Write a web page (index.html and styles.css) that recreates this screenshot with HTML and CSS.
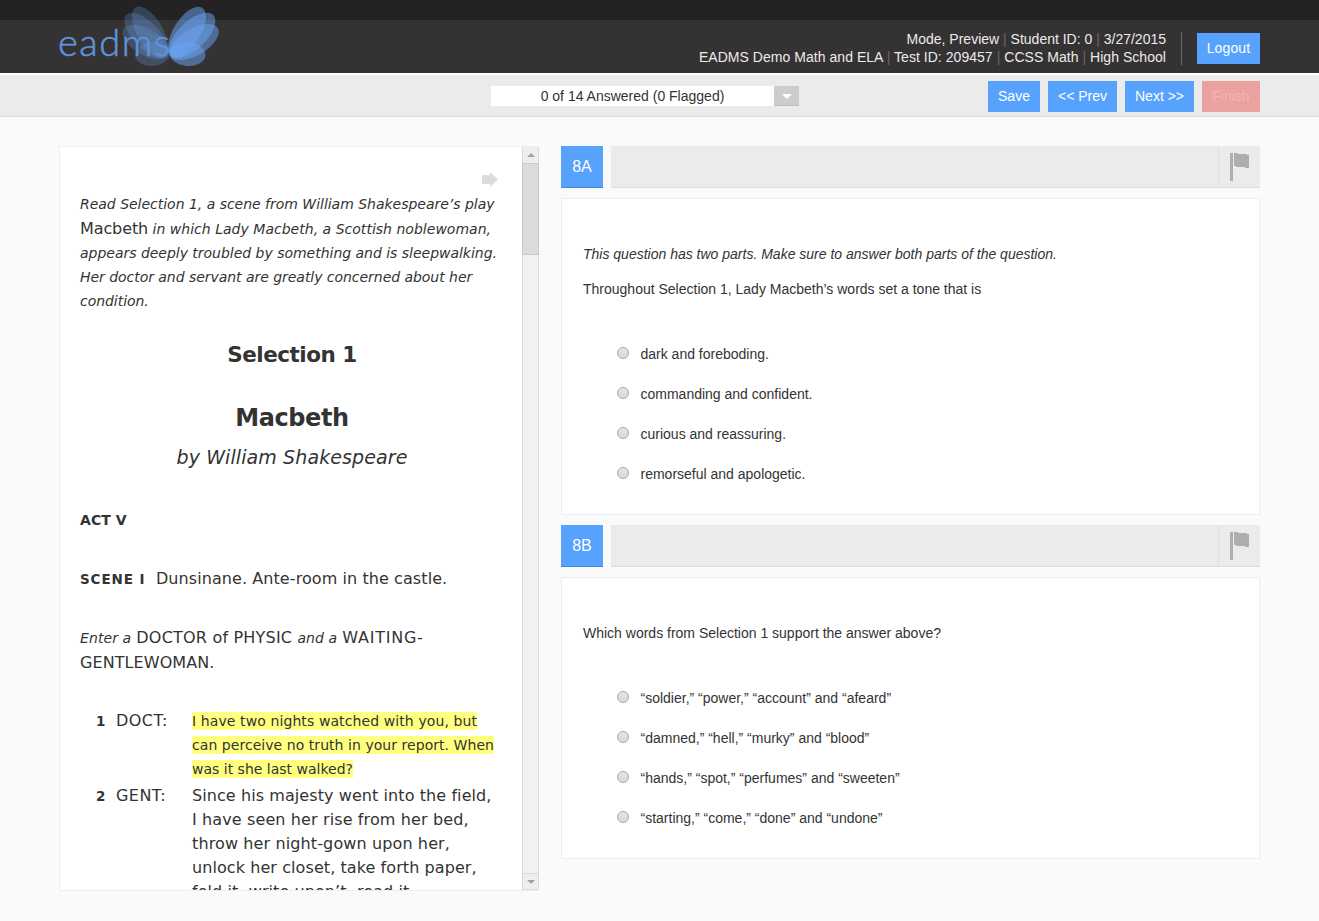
FILE: index.html
```html
<!DOCTYPE html>
<html lang="en">
<head>
<meta charset="utf-8">
<title>EADMS Student Test</title>
<link rel="stylesheet" href="styles.css">
</head>
<body>
<div class="topstrip"></div>
<header class="header">
  <div class="logo">
    <svg width="164" height="72" viewBox="0 0 164 72">
      <g fill="#6da4f0" fill-opacity=".25">
        <ellipse cx="92" cy="32" rx="13" ry="28.500" transform="rotate(-30 92 32)"/>
        <ellipse cx="88.500" cy="35.500" rx="13" ry="29" transform="rotate(-44 88.500 35.500)" />
        <ellipse cx="88" cy="42" rx="13" ry="26" transform="rotate(-60 88 42)" />
        <ellipse cx="94.500" cy="54" rx="17.500" ry="12" transform="rotate(-5 94.500 54)" />
      </g>
      <text class="logo-text" x="0" y="55.500" textLength="112" lengthAdjust="spacing">eadms</text>
      <g fill="#6ca3f3" fill-opacity=".52">
        <ellipse cx="129" cy="32" rx="13.500" ry="28.500" transform="rotate(32 129 32)"/>
        <ellipse cx="134" cy="35.500" rx="14" ry="29.500" transform="rotate(46 134 35.500)"/>
        <ellipse cx="136" cy="42" rx="13.500" ry="27.500" transform="rotate(60 136 42)"/>
        <ellipse cx="129.500" cy="54" rx="18" ry="12" transform="rotate(5 129.500 54)"/>
      </g>
    </svg>
  </div>
  <div class="account">
    <div class="info">
      <div>Mode, Preview <i>|</i> Student ID: 0 <i>|</i> 3/27/2015</div>
      <div class="info-test">EADMS Demo Math and ELA <i>|</i> Test ID: 209457 <i>|</i> CCSS Math <i>|</i> High School</div>
    </div>
    <div class="rule"></div>
    <button class="btn logout">Logout</button>
  </div>
</header>
<nav class="toolbar">
  <div class="progress">
    <span class="progress-label">0 of 14 Answered (0 Flagged)</span>
    <span class="progress-arrow"><svg width="10" height="5"><path d="M0 0h10L5 5z" fill="#fff"/></svg></span>
  </div>
  <div class="actions">
    <button class="btn save">Save</button>
    <button class="btn step">&lt;&lt; Prev</button>
    <button class="btn step">Next &gt;&gt;</button>
    <button class="btn finish">Finish</button>
  </div>
</nav>
<main class="main">
  <section class="passage">
    <div class="passage-body">
      <div class="expand"><svg width="16" height="15"><path d="M0 3h8V0l8 7.500L8 15v-3H0z" fill="#dcdcdc"/></svg></div>
      <div class="line em">Read Selection 1, a scene from William Shakespeare’s play</div>
      <div class="line em l25"><span class="title-word">Macbeth</span> <span class="loose">in which Lady Macbeth, a Scottish noblewoman,</span></div>
      <div class="line em">appears deeply troubled by something and is sleepwalking.</div>
      <div class="line em tight">Her doctor and servant are greatly concerned about her</div>
      <div class="line em tight">condition.</div>
      <h2 class="selection">Selection 1</h2>
      <h1 class="play">Macbeth</h1>
      <div class="byline">by William Shakespeare</div>
      <div class="line act">ACT V</div>
      <div class="line scene"><b>SCENE I</b>Dunsinane. Ante-room in the castle.</div>
      <div class="line enter"><em>Enter a</em> <span class="caps">DOCTOR of PHYSIC</span> <em>and a</em> <span class="waiting">WAITING-</span></div>
      <div class="line l25">GENTLEWOMAN.</div>
      <div class="speech first">
        <b>1</b><span class="who">DOCT:</span>
        <div class="small">
          <div class="line"><mark class="wide">I have two nights watched with you, but</mark></div>
          <div class="line"><mark class="mid">can perceive no truth in your report. When</mark></div>
          <div class="line"><mark>was it she last walked?</mark></div>
        </div>
      </div>
      <div class="speech second">
        <b>2</b><span class="who">GENT:</span>
        <div class="verse">
          <div class="line">Since his majesty went into the field,</div>
          <div class="line verse-wide">I have seen her rise from her bed,</div>
          <div class="line verse-wide">throw her night-gown upon her,</div>
          <div class="line">unlock her closet, take forth paper,</div>
          <div class="line">fold it, write upon’t, read it,</div>
        </div>
      </div>
    </div>
    <div class="scrollbar">
      <div class="sb-btn"><svg width="8" height="4"><path d="M0 4h8L4 0z" fill="#a3a3a3"/></svg></div>
      <div class="sb-thumb"></div>
      <div class="sb-track"></div>
      <div class="sb-btn sb-down"><svg width="8" height="4"><path d="M0 0h8L4 4z" fill="#a3a3a3"/></svg></div>
    </div>
  </section>
  <section class="questions">
    <div class="qhead">
      <div class="qnum">8A</div>
      <div class="qbar"><div class="flag"><svg width="19" height="28" shape-rendering="crispEdges"><path d="M0 0h3v28H0zM4 0h4v1h9v1h2v13h-4v-1H6v-1H4z" fill="#aeaeae"/></svg></div></div>
    </div>
    <div class="card card-a">
      <p class="note">This question has two parts. Make sure to answer both parts of the question.</p>
      <p class="prompt">Throughout Selection 1, Lady Macbeth’s words set a tone that is</p>
      <div class="choices">
        <label><span class="radio"></span>dark and foreboding.</label>
        <label><span class="radio"></span>commanding and confident.</label>
        <label><span class="radio"></span>curious and reassuring.</label>
        <label><span class="radio"></span>remorseful and apologetic.</label>
      </div>
    </div>
    <div class="qhead">
      <div class="qnum">8B</div>
      <div class="qbar"><div class="flag"><svg width="19" height="28" shape-rendering="crispEdges"><path d="M0 0h3v28H0zM4 0h4v1h9v1h2v13h-4v-1H6v-1H4z" fill="#aeaeae"/></svg></div></div>
    </div>
    <div class="card card-b">
      <p class="prompt">Which words from Selection 1 support the answer above?</p>
      <div class="choices">
        <label><span class="radio"></span>“soldier,” “power,” “account” and “afeard”</label>
        <label><span class="radio"></span>“damned,” “hell,” “murky” and “blood”</label>
        <label><span class="radio"></span>“hands,” “spot,” “perfumes” and “sweeten”</label>
        <label><span class="radio"></span>“starting,” “come,” “done” and “undone”</label>
      </div>
    </div>
  </section>
</main>
</body>
</html>
```
FILE: styles.css
```css
* { box-sizing: border-box; }
body {
  margin: 0;
  height: 921px;
  overflow: hidden;
  background: #fafafa;
  color: #333;
  font: 14px/18px "Liberation Sans", Arial, sans-serif;
}
p, h1, h2 { margin: 0; }
svg { display: block; }

.topstrip { height: 20px; background: #232323; }
.header {
  height: 53px;
  padding: 0 59px 0 58px;
  display: flex;
  justify-content: space-between;
  background: #353233;
}
.logo { margin-top: -20px; height: 72px; }
.logo-text { font: 300 38px Lato, sans-serif; fill: #5f92dc; stroke: #5f92dc; stroke-width: .6; }
.account { display: flex; align-items: flex-start; }
.info { padding-top: 10px; text-align: right; color: #ebebeb; white-space: nowrap; }
.info i { font-style: normal; color: #6a6768; }
.info-test { letter-spacing: .04px; }
.rule { width: 1px; height: 33px; margin: 12px 15px 0; background: #6b6869; }
.btn {
  height: 31px;
  padding: 0 0 1px;
  border: 0;
  background: #56a2fc;
  color: #fff;
  font: 14px "Liberation Sans", Arial, sans-serif;
  text-align: center;
}
.logout { width: 63px; margin-top: 13px; letter-spacing: .15px; }

.toolbar {
  height: 44px;
  padding: 6px 59px 0 491px;
  display: flex;
  justify-content: space-between;
  background: #ebebeb;
  border-top: 2px solid #fff;
  border-bottom: 1px solid #ddd;
}
.progress { display: flex; width: 308px; height: 20px; margin-top: 5px; }
.progress-label { flex: 1; background: #fff; text-align: center; line-height: 20px; }
.progress-arrow {
  width: 25px;
  padding-top: 2px;
  display: grid;
  place-items: center;
  background: #ccc;
  border-bottom: 1px solid #bfbfbf;
}
.actions { display: flex; gap: 8px; }
.save { width: 52px; }
.step { width: 69px; }
.finish { width: 58px; background: #eca1a1; color: #f4b4b4; }

.main { display: flex; gap: 22px; padding: 29px 59px 0; }
.passage {
  width: 480px;
  height: 745px;
  display: flex;
  overflow: hidden;
  background: #fff;
  border: 1px solid #eee;
  border-right: 0;
}
.passage-body {
  flex: 1;
  padding-left: 20px;
  font: 16px/24px "DejaVu Sans", Verdana, sans-serif;
  white-space: nowrap;
}
.expand { height: 45px; padding: 25px 0 0 402px; }
.line { height: 24px; letter-spacing: .08px; }
.l25 { height: 25px; line-height: 25px; }
.em { font-size: 14px; font-style: italic; letter-spacing: -.02px; }
.tight { letter-spacing: -.04px; }
.loose { letter-spacing: .02px; }
.title-word { font-size: 16px; font-style: normal; letter-spacing: -.1px; }
.selection, .play, .byline { width: 424px; text-align: center; }
.selection { margin-top: 30px; font-size: 21.500px; line-height: 24px; height: 24px; letter-spacing: -.5px; }
.play { margin-top: 38px; font-size: 24px; line-height: 26px; letter-spacing: -.4px; }
.byline { margin-top: 14px; font-size: 19px; font-style: italic; letter-spacing: .1px; }
.act { margin-top: 39px; font-size: 14px; font-weight: bold; }
.scene { margin-top: 35px; }
.scene b { margin-right: 10.500px; font-size: 13.500px; letter-spacing: .9px; }
.enter { margin-top: 35px; }
.enter em { font-size: 14px; }
.caps { letter-spacing: .2px; }
.waiting { letter-spacing: .75px; }
.speech { display: grid; grid-template-columns: 36px 76px 1fr; }
.speech b { padding-left: 16px; font-size: 13.500px; }
.who { letter-spacing: .45px; }
.first { margin-top: 34px; }
.second { margin-top: 3px; }
.small { font-size: 14px; }
.verse-wide { letter-spacing: .12px; }
mark { padding: 1px 0; background: #ffff80; color: #333; letter-spacing: 0; }
.wide { letter-spacing: .1px; }
.mid { letter-spacing: .05px; }

.scrollbar { width: 17px; display: flex; flex-direction: column; }
.sb-btn { height: 17px; display: grid; place-items: center; background: #eee; border: 1px solid #dadada; border-top: 0; }
.sb-thumb { height: 92px; margin-top: -1px; background: #dcdcdc; border: 1px solid #c9c9c9; }
.sb-track { flex: 1; background: #f1f1f1; border: solid #dadada; border-width: 0 1px; }
.sb-down { border-top: 1px solid #dadada; }

.questions { width: 699px; }
.qhead { display: flex; gap: 8px; height: 42px; margin-bottom: 10px; }
.qnum {
  width: 42px;
  background: #56a2fc;
  border-bottom: 1px solid #4488dc;
  color: #fff;
  font-size: 16px;
  line-height: 41px;
  text-align: center;
}
.qbar {
  flex: 1;
  display: flex;
  justify-content: flex-end;
  background: #ebebeb;
  border-bottom: 1px solid #ddd;
}
.flag { width: 42px; padding: 7px 0 0 11px; border-left: 1px solid #e0e0e0; }
.card { background: #fff; border: 1px solid #eee; padding: 46px 21px 0; }
.card-a { height: 317px; margin-bottom: 10px; }
.card-b { height: 282px; }
.note { font-style: italic; margin-bottom: 17px; }
.choices { padding: 46px 0 0 34px; display: grid; gap: 20px; }
.choices label { display: flex; height: 20px; line-height: 20px; }
.radio {
  width: 12px;
  height: 12px;
  margin: 3px 11.500px 0 0;
  border: 1px solid #aaa;
  border-radius: 50%;
  background: linear-gradient(#e6e6e6, #d8d8d8);
}
```
